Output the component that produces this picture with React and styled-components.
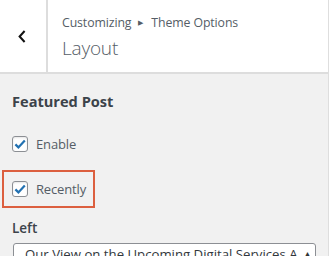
import styled, { createGlobalStyle } from "styled-components";

const Global = createGlobalStyle`
  html, body {
    margin: 0;
    padding: 0;
    background: #f1f1f1;
  }
  body {
    font-family: "Open Sans", "Noto Sans", sans-serif;
    overflow: hidden;
  }
`;

const Panel = styled.div`
  width: 328px;
  height: 256px;
  border-right: 1px solid #dedede;
  background: #f1f1f1;
  overflow: hidden;
`;

const Header = styled.header`
  display: flex;
  height: 72px;
  background: #fff;
  border-bottom: 2px solid #dddddd;
`;

const BackButton = styled.button`
  width: 48px;
  flex: none;
  display: flex;
  align-items: center;
  justify-content: center;
  padding: 0 2px 0 0;
  border: none;
  border-right: 2px solid #dddddd;
  background: transparent;
  cursor: pointer;
`;

const Titles = styled.div`
  display: flex;
  flex-direction: column;
  padding: 14px 0 0 14px;
  color: #555d66;
`;

const Crumb = styled.span`
  font-size: 12.3px;
  line-height: 18px;
  letter-spacing: -0.1px;
`;

const Arrow = styled.span`
  display: inline-block;
  font-size: 7px;
  margin: 0 8px 0 7px;
  vertical-align: 2px;
`;

const Title = styled.h1`
  margin: 4px 0 0;
  font-size: 19px;
  font-weight: 300;
  line-height: 24px;
  letter-spacing: -0.2px;
`;

const Body = styled.section`
  padding: 17px 12px 0;
`;

const SectionTitle = styled.h2`
  margin: 0 0 25px;
  font-size: 14.6px;
  font-weight: 700;
  line-height: 20px;
  color: #3c434a;
`;

const Option = styled.label`
  display: flex;
  align-items: center;
  gap: 8px;
  width: fit-content;
  height: 16px;
  font-size: 13px;
  letter-spacing: -0.15px;
  color: #555d66;
  margin: ${(p) => (p.$highlight ? "0 0 0 -10px" : "0 0 18px")};
  padding: ${(p) => (p.$highlight ? "9px 7px 9px 8px" : "0")};
  border: ${(p) => (p.$highlight ? "2px solid #dc5f3f" : "none")};
`;

const Box = styled.span`
  width: 14px;
  height: 14px;
  flex: none;
  display: flex;
  align-items: center;
  justify-content: center;
  border: 1px solid #8c8f94;
  border-radius: 3px;
  background: #fff;
  box-shadow: inset 0 1px 2px rgba(0, 0, 0, 0.1);
`;

const FieldLabel = styled.div`
  margin: 10px 0 5px;
  font-size: 13.5px;
  font-weight: 600;
  line-height: 20px;
  color: #3c434a;
`;

const Select = styled.div`
  position: relative;
  width: 290px;
  height: 28px;
  margin-left: 1px;
  padding: 0 0 0 11px;
  border: 1px solid #8c8f94;
  border-radius: 3px;
  background: #fff;
  font-size: 13.2px;
  line-height: 21px;
  color: #32373c;
  white-space: nowrap;
  overflow: hidden;
`;

const SelectText = styled.span`
  display: block;
  width: 272px;
  overflow: hidden;
`;

const Caret = styled.span`
  position: absolute;
  right: 4px;
  top: 6px;
  font-size: 7px;
  line-height: 8px;
  color: #333;
`;

const Check = () => (
  <svg width="14" height="14" viewBox="0 0 14 14">
    <path
      d="M2.4 7.4 L5.4 10.4 L11.8 3.4"
      fill="none"
      stroke="#2271b1"
      strokeWidth="2.2"
    />
  </svg>
);

const options = [
  { label: "Enable", highlight: false },
  { label: "Recently", highlight: true },
];

export default function App() {
  return (
    <>
      <Global />
      <Panel>
        <Header>
          <BackButton aria-label="Back">
            <svg width="8" height="13" viewBox="0 0 8 13">
              <path d="M6.6 1 L1.6 6.5 L6.6 12" fill="none" stroke="#111" strokeWidth="2" />
            </svg>
          </BackButton>
          <Titles>
            <Crumb>
              Customizing<Arrow>▶</Arrow>Theme Options
            </Crumb>
            <Title>Layout</Title>
          </Titles>
        </Header>
        <Body>
          <SectionTitle>Featured Post</SectionTitle>
          {options.map((o) => (
            <Option key={o.label} $highlight={o.highlight}>
              <Box>
                <Check />
              </Box>
              {o.label}
            </Option>
          ))}
          <FieldLabel>Left</FieldLabel>
          <Select>
            <SelectText>Our View on the Upcoming Digital Services Act</SelectText>
            <Caret>▲</Caret>
          </Select>
        </Body>
      </Panel>
    </>
  );
}
